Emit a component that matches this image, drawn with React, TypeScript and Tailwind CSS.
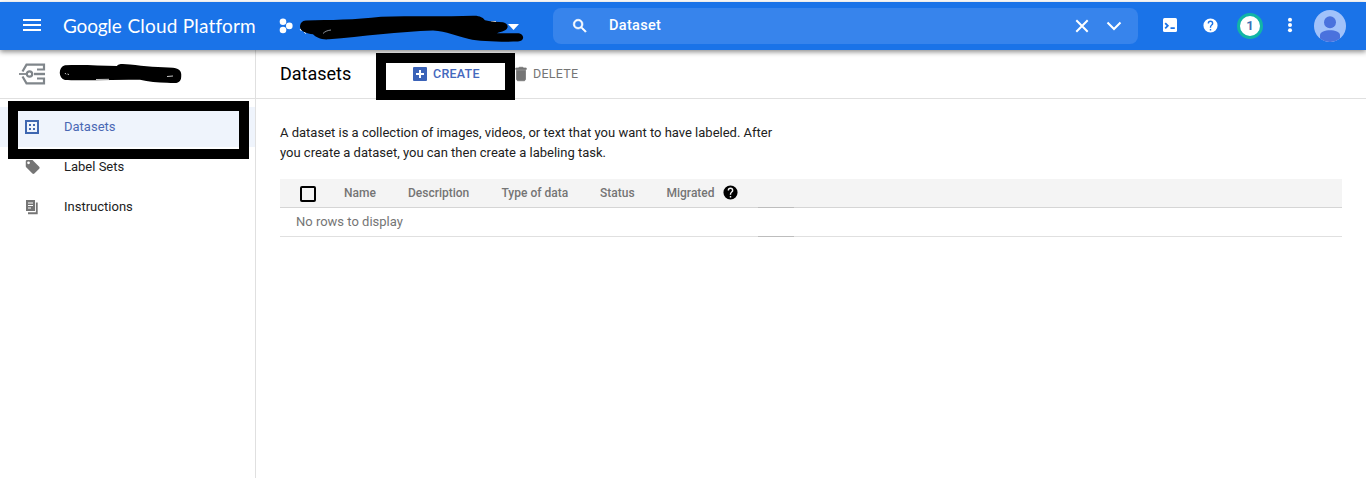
import type { ReactNode } from "react";

function Icon({ size = 18, className = "", children }: { size?: number; className?: string; children: ReactNode }) {
  return (
    <svg width={size} height={size} viewBox="0 0 24 24" fill="currentColor" className={"shrink-0 " + className}>
      {children}
    </svg>
  );
}

function TopBar() {
  return (
    <header className="relative z-10 flex h-12 shrink-0 items-center bg-[#1a73e8] text-white shadow-[0_2px_5px_rgba(0,0,0,0.45)]">
      <Icon size={24} className="-mt-0.5 ml-5">
        <path d="M3 18h18v-2H3v2zm0-5h18v-2H3v2zm0-7v2h18V6H3z" />
      </Icon>
      <div className="ml-[19px] flex w-[200px] gap-[6px] whitespace-nowrap font-['Lato',sans-serif] text-[19px] leading-6">
        <span className="tracking-[-0.2px]">Google</span>
        <span className="tracking-[0.2px]">Cloud Platform</span>
      </div>
      <div className="relative ml-[15px] flex h-full w-[246px] items-center">
        <svg width="246" height="48" viewBox="278 2 246 48" fill="currentColor">
          <circle cx="283" cy="21.8" r="3.3" />
          <circle cx="289.3" cy="25.9" r="3.3" />
          <circle cx="283" cy="30" r="3.3" />
          <path d="M508 24h11l-5.500 6z" />
          <path d="M300 29l1.500 2M491 21.500h5M304 32l2 1.500" stroke="currentColor" strokeWidth="1" />
          <path
            fill="#000"
            d="M306 20.500C330 20 355 20 381 16.800c30-1 65 0 92-1 7-.3 10 2 12 4.500 7 2 13 1.500 18 2 6 1 6 7 1 8.500-2 1-5 1.500-7 2.500h20c8 0 8 8 1 8.200-15 .5-39 0-49-2.500-13-3-22-7.500-36-8.500-33 1-72 6-104 8.800-8 .7-13-2-16-5-6-.5-13-3-13-7.500 0-3.500 2-6 6-6.300z"
          />
          <path d="M323 33.500c2-2 4-3 8-3.500" stroke="#e8f0fe" strokeWidth=".6" fill="none" />
        </svg>
      </div>
      <div className="ml-[29px] flex h-9 w-[585px] items-center rounded-lg bg-[#3784ec]">
        <Icon size={18} className="ml-[18px]">
          <path stroke="currentColor" strokeWidth=".8" d="M15.500 14h-.79l-.28-.27A6.470 6.470 0 0 0 16 9.500 6.500 6.500 0 1 0 9.500 16c1.610 0 3.090-.59 4.230-1.570l.27.28v.79l5 4.990L20.490 19l-4.990-5zm-6 0C7.010 14 5 11.990 5 9.500S7.010 5 9.500 5 14 7.010 14 9.500 11.990 14 9.500 14z" />
        </Icon>
        <span className="ml-5 grow text-[14.500px] font-medium leading-5 tracking-[0.3px]">Dataset</span>
        <svg width="14" height="14" viewBox="0 0 14 14" fill="none" stroke="currentColor" strokeWidth="2" className="mr-[17px]">
          <path d="M1.300 1.300l11.400 11.400M12.700 1.300L1.300 12.700" />
        </svg>
        <svg width="16" height="10" viewBox="0 0 16 10" fill="none" stroke="currentColor" strokeWidth="2" className="mr-4">
          <path d="M1.500 1.500L8 8l6.500-6.500" />
        </svg>
      </div>
      <svg width="14" height="14" viewBox="0 0 14 14" className="-mt-0.5 ml-[25px] shrink-0">
        <rect width="14" height="14" rx="1.500" fill="#fff" />
        <path d="M2.200 5.200l2.600 2.600-2.600 2.600M7.500 10.200h4.300" fill="none" stroke="#1a73e8" strokeWidth="1.800" />
      </svg>
      <Icon size={17} className="-mt-0.5 ml-[25px]">
        <path d="M12 2a10 10 0 1 0 0 20 10 10 0 0 0 0-20zm1 17h-2v-2h2v2zm2.070-7.750-.9.920C13.450 12.900 13 13.500 13 15h-2v-.5c0-1.100.45-2.100 1.170-2.830l1.240-1.260c.37-.36.59-.86.59-1.410a2 2 0 1 0-4 0H8a4 4 0 1 1 8 0c0 .88-.36 1.680-.93 2.250z" />
      </Icon>
      <div className="ml-[18px] flex size-[26px] items-center justify-center rounded-full border-[3px] border-[#12b5a6] bg-white text-[13px] font-bold text-[#3c6fb5]">
        1
      </div>
      <Icon size={18} className="-mt-0.5 ml-[18px]">
        <circle cx="12" cy="5" r="2.700" />
        <circle cx="12" cy="12" r="2.700" />
        <circle cx="12" cy="19" r="2.700" />
      </Icon>
      <svg width="32" height="32" viewBox="0 0 32 32" className="ml-[15px] shrink-0">
        <circle cx="16" cy="16" r="16" fill="#a1c2fa" />
        <circle cx="16" cy="12.300" r="6" fill="#4a72dd" />
        <path d="M6 28.500V25c0-3 5-4.800 10-4.800S26 22 26 25v3.500A16 16 0 0 1 6 28.500z" fill="#4a72dd" />
      </svg>
    </header>
  );
}

function NavItem({ icon, label, active = false }: { icon: ReactNode; label: string; active?: boolean }) {
  return (
    <div className={"flex h-10 items-center pl-[23px] " + (active ? "bg-[#eff4fc] text-[#4a68b4]" : "text-[#212121]")}>
      {icon}
      <span className="ml-[23px] text-[13px]">{label}</span>
    </div>
  );
}

function Sidebar() {
  return (
    <aside className="flex w-64 shrink-0 flex-col border-r border-[#e0e0e0]">
      <div className="flex h-[49px] items-center border-b border-[#e0e0e0] pl-[19px]">
        <svg width="27" height="22" viewBox="0 0 27 22" fill="none" stroke="#80868b" strokeWidth="2.200">
          <path d="M18 6.500h7V1.700H7.500L3.500 8.500M3.500 13.500l4 6.800H25V15.500h-7" />
          <path d="M0 11h8" strokeWidth="1.800" />
          <circle cx="10.500" cy="11" r="2.700" strokeWidth="2.200" />
          <path d="M15 11h11" strokeWidth="2.400" />
        </svg>
        <svg width="124" height="24" viewBox="58 62 124 24" className="ml-3">
          <path
            d="M65 65.300c15-1 34 .2 52 .8 1-3 8-2.200 13-1.500 14 1.700 31 3 43 3.200 8 .7 9 5 8 11-2 6-8 4-14 4-9-.4-19-.8-27-3-15-.5-30 .2-45 .5-11 0-23 0-30-.3-7-1.500-7-13 0-14.700z"
            fill="#000"
          />
          <path d="M65 73l1 1.300M67.500 74l1.500.6M167 76.500l6-.5M96 79.500l13-.2" stroke="#ddd" strokeWidth=".9" />
        </svg>
      </div>
      <nav className="flex flex-col pt-2">
        <NavItem
          active
          label="Datasets"
          icon={
            <svg width="18" height="18" viewBox="0 0 18 18" fill="none" className="shrink-0">
              <rect x="3" y="3" width="12" height="12" stroke="#3f67b0" strokeWidth="2" />
              <path d="M6 6h2v2H6zM10 6h2v2h-2zM6 10h2v2H6zM10 10h2v2h-2z" fill="#3f67b0" />
            </svg>
          }
        />
        <NavItem
          label="Label Sets"
          icon={
            <svg width="18" height="18" viewBox="-2 -1 26 26" className="shrink-0" fill="#757575">
              <path d="M21.410 11.580l-9-9C12.050 2.220 11.550 2 11 2H4c-1.100 0-2 .9-2 2v7c0 .55.22 1.050.59 1.420l9 9c.36.36.86.58 1.410.58s1.050-.22 1.410-.59l7-7c.37-.36.59-.86.59-1.410s-.23-1.060-.59-1.420zM6 8a2 2 0 1 1 0-4 2 2 0 0 1 0 4z" />
            </svg>
          }
        />
        <NavItem
          label="Instructions"
          icon={
            <svg width="18" height="18" viewBox="0 0 18 18" fill="none" className="shrink-0">
              <path d="M3 2h9v11H3z" fill="#757575" />
              <path d="M5 5h5M5 7.500h5M5 10h3" stroke="#fff" />
              <path d="M13.800 4.500v10.750H5" stroke="#757575" strokeWidth="1.800" />
            </svg>
          }
        />
      </nav>
    </aside>
  );
}

function DatasetTable() {
  return (
    <div className="mt-4 text-[13px] text-[#757575]">
      <div className="relative flex h-[29px] items-center border-b border-[#d5d5d5] bg-[#f4f4f4] pl-5 text-[12px] font-medium">
        <span className="mt-px size-4 rounded-[2px] border-2 border-black" />
        <span className="ml-7 w-16">Name</span>
        <span className="w-[93.500px]">Description</span>
        <span className="w-[98.500px]">Type of data</span>
        <span className="w-[66.500px]">Status</span>
        <span className="w-[55px]">Migrated</span>
        <Icon size={17} className="-mt-0.5 text-black">
          <path d="M12 2a10 10 0 1 0 0 20 10 10 0 0 0 0-20zm1 17h-2v-2h2v2zm2.070-7.750-.9.920C13.450 12.900 13 13.500 13 15h-2v-.5c0-1.100.45-2.100 1.170-2.830l1.240-1.260c.37-.36.59-.86.59-1.410a2 2 0 1 0-4 0H8a4 4 0 1 1 8 0c0 .88-.36 1.680-.93 2.250z" />
        </Icon>
        <span className="absolute -bottom-px left-[478px] h-px w-9 bg-[#bdbdbd]" />
      </div>
      <div className="relative flex h-[29px] items-center border-b border-[#e0e0e0] pl-4">
        No rows to display
        <span className="absolute -bottom-px left-[478px] h-px w-9 bg-[#bdbdbd]" />
      </div>
    </div>
  );
}

export default function App() {
  return (
    <div className="relative flex h-[478px] w-[1366px] flex-col overflow-hidden bg-white pt-0.5 font-['Roboto',sans-serif] text-[#212121]">
      <TopBar />
      <div className="flex grow">
        <Sidebar />
        <main className="flex grow flex-col">
          <div className="flex h-[49px] items-center border-b border-[#e0e0e0] pl-6 text-[12.500px] font-medium">
            <h1 className="-mt-0.5 w-[133px] text-[18px] font-normal text-black">Datasets</h1>
            <svg width="14" height="14" viewBox="0 0 14 14" className="shrink-0">
              <rect width="14" height="14" rx="1" fill="#3b63b8" />
              <path d="M7 3v8M3 7h8" stroke="#fff" strokeWidth="2" />
            </svg>
            <span className="ml-1.5 w-[79px] tracking-[0.25px] text-[#4468bd]">CREATE</span>
            <Icon className="text-[#757575]">
              <path d="M6 19c0 1.100.9 2 2 2h8c1.100 0 2-.9 2-2V7H6v12zM19 4h-3.500l-1-1h-5l-1 1H5v2h14V4z" stroke="currentColor" />
            </Icon>
            <span className="ml-[3px] font-normal tracking-[0.25px] text-[#757575]">DELETE</span>
          </div>
          <section className="pl-6 pr-6 pt-6">
            <p className="w-[510px] text-[13px] leading-5">
              A dataset is a collection of images, videos, or text that you want to have labeled. After
              <br />
              you create a dataset, you can then create a labeling task.
            </p>
            <DatasetTable />
          </section>
        </main>
      </div>
      <div className="absolute left-2 top-[101px] z-20 h-[58px] w-[241px] border-[10px] border-black" />
      <div className="absolute left-[376px] top-[53px] z-20 h-[47px] w-[139px] border-[10px] border-black" />
    </div>
  );
}
